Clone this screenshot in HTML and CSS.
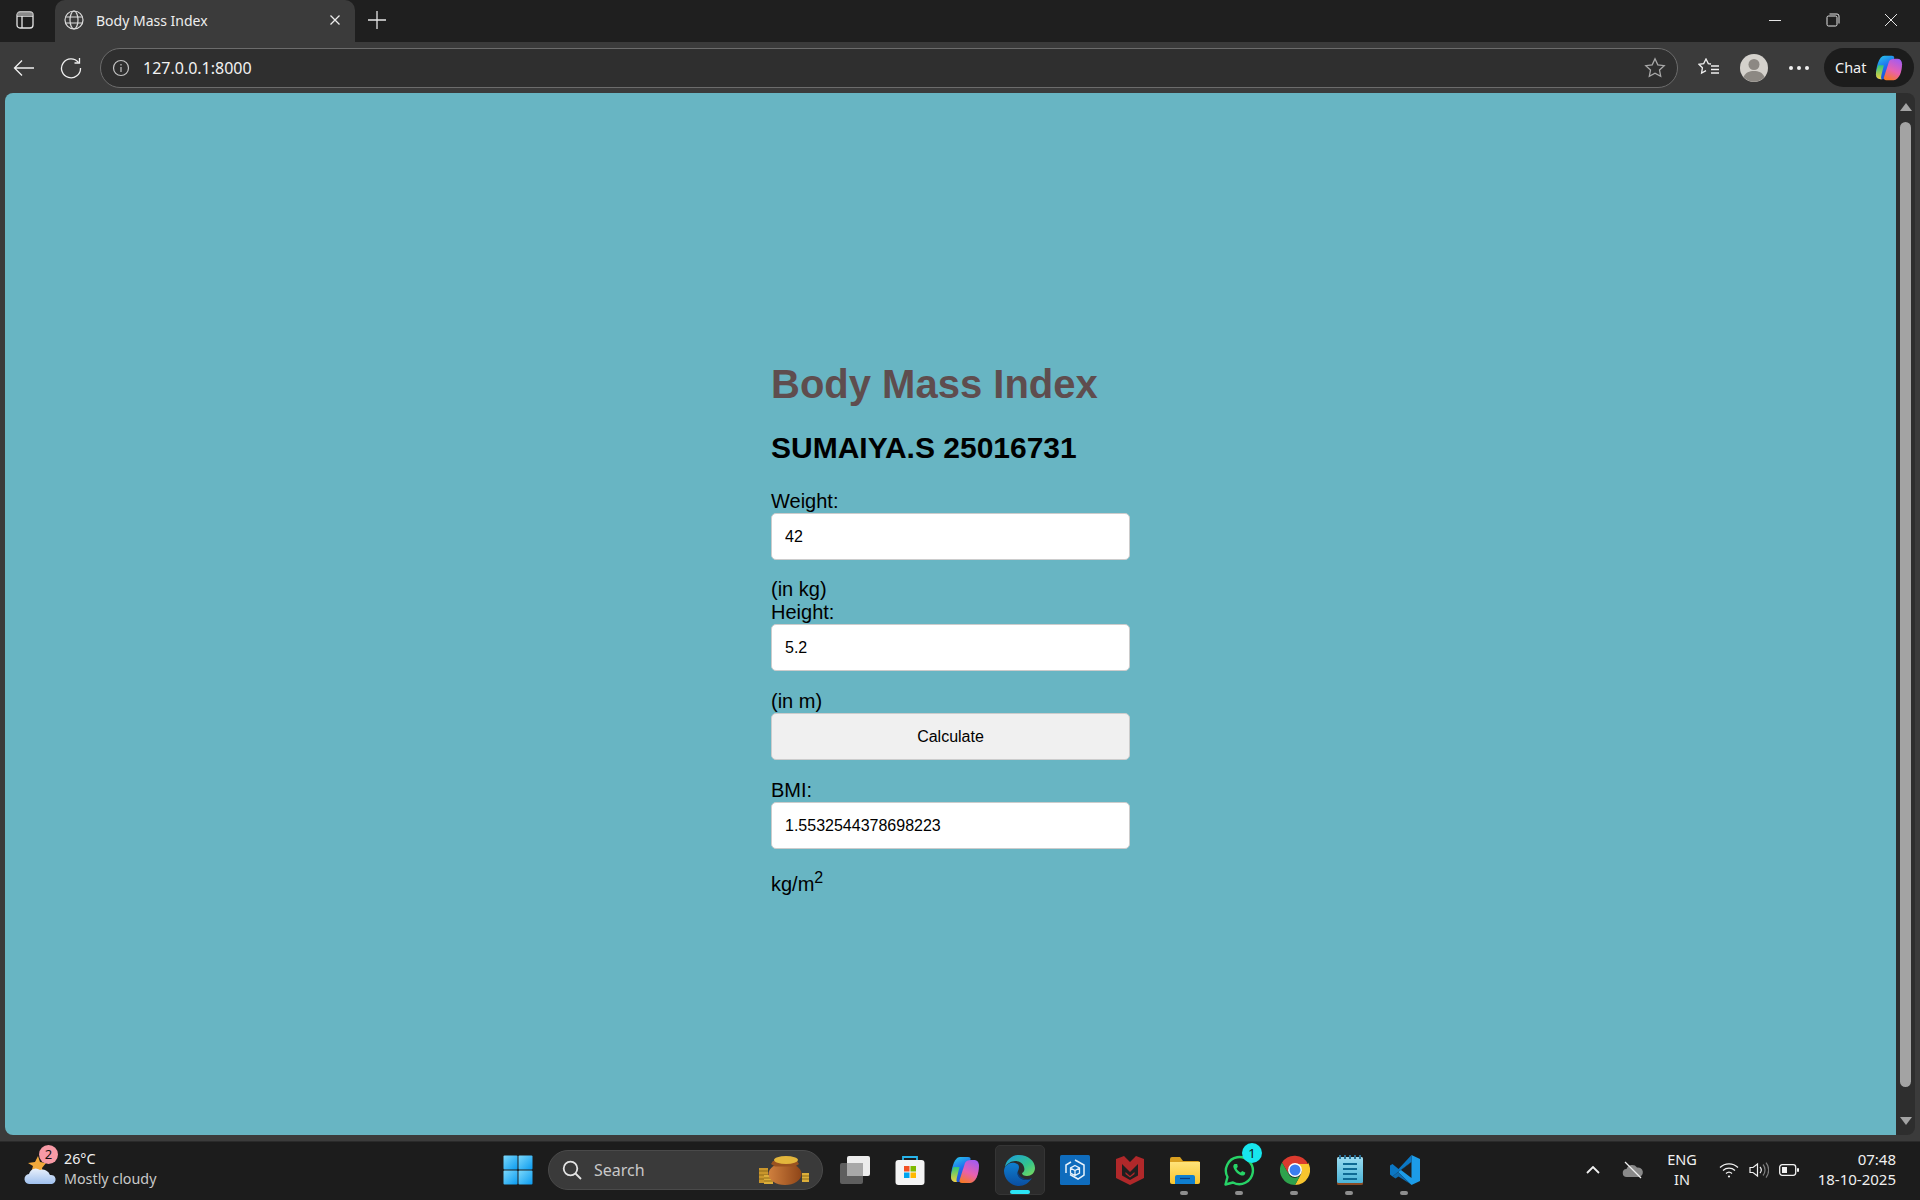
FILE: index.html
```html
<!DOCTYPE html>
<html lang="en">
<head>
    <meta charset="UTF-8">
    <title>Body Mass Index</title>
    <link rel="stylesheet" href="styles.css">
</head>
<body>
    <svg class="defs" width="0" height="0">
        <defs>
            <linearGradient id="copilotA" x1="0.2" y1="0" x2="0.6" y2="1">
                <stop offset="0" stop-color="#27c4ea"/>
                <stop offset="0.5" stop-color="#1f6cf0"/>
                <stop offset="1" stop-color="#1a4fd0"/>
            </linearGradient>
            <linearGradient id="copilotB" x1="0.7" y1="0" x2="0.3" y2="1">
                <stop offset="0" stop-color="#a45cf0"/>
                <stop offset="0.55" stop-color="#e860b0"/>
                <stop offset="1" stop-color="#f5782c"/>
            </linearGradient>
            <linearGradient id="copilotC" x1="0" y1="0" x2="0" y2="1">
                <stop offset="0" stop-color="#2fc77a"/>
                <stop offset="1" stop-color="#f2d03a"/>
            </linearGradient>
            <linearGradient id="edgeA" x1="0" y1="0" x2="1" y2="1">
                <stop offset="0" stop-color="#1b9de2"/>
                <stop offset="0.6" stop-color="#33c48c"/>
                <stop offset="1" stop-color="#7fdc5a"/>
            </linearGradient>
            <linearGradient id="edgeB" x1="0" y1="0" x2="0" y2="1">
                <stop offset="0" stop-color="#0f7fd0"/>
                <stop offset="1" stop-color="#0a4ea0"/>
            </linearGradient>
            <linearGradient id="startTile" x1="0" y1="0" x2="1" y2="1">
                <stop offset="0" stop-color="#7bd8fb"/>
                <stop offset="1" stop-color="#0a9bf0"/>
            </linearGradient>
            <linearGradient id="cloudFill" x1="0" y1="0" x2="0" y2="1">
                <stop offset="0" stop-color="#e8f0fb"/>
                <stop offset="1" stop-color="#9fc0ee"/>
            </linearGradient>
            <linearGradient id="potFill" x1="0" y1="0" x2="1" y2="0">
                <stop offset="0" stop-color="#d0803e"/>
                <stop offset="1" stop-color="#8e4518"/>
            </linearGradient>
            <linearGradient id="folderFill" x1="0" y1="0" x2="0" y2="1">
                <stop offset="0" stop-color="#ffe37a"/>
                <stop offset="1" stop-color="#f8c52e"/>
            </linearGradient>
            <linearGradient id="noteFill" x1="0" y1="0" x2="0" y2="1">
                <stop offset="0" stop-color="#9adcf0"/>
                <stop offset="1" stop-color="#4bb4d8"/>
            </linearGradient>
            <symbol id="copilot" viewBox="0 0 30 30">
                <path d="M10 2h8c2 0 3 1 2.400 3L15 22c-1 3-3 5-6 5H6c-3 0-5-2-5-5 0-7 3-20 9-20z" fill="url(#copilotA)"/>
                <path d="M1 22c0-3 1-7 2.500-10h6L7 22c-.6 3-1 5 1 5H6c-3 0-5-2-5-5z" fill="url(#copilotC)"/>
                <path d="M21 5h3c3 0 5 2 5 6 0 7-3 17-9 17h-8c-2 0-3-1-2.400-3l5.400-17c.8-2 3-3 6-3z" fill="url(#copilotB)"/>
            </symbol>
        </defs>
    </svg>

    <div class="tabstrip">
        <div class="sidebar-btn">
            <svg width="18" height="18" viewBox="0 0 18 18" fill="none" stroke="#e6e6e6" stroke-width="1.300">
                <rect x="1" y="1" width="16" height="16" rx="3"/>
                <path d="M1 5h16M6 5v12"/>
                <path d="M1.500 1.500h15v3.500h-15z" fill="#8a8a8a" stroke="none"/>
            </svg>
        </div>
        <div class="tab">
            <svg width="20" height="20" viewBox="0 0 20 20" fill="none" stroke="#dcdcdc" stroke-width="1.200">
                <circle cx="10" cy="10" r="9"/>
                <ellipse cx="10" cy="10" rx="4" ry="9"/>
                <path d="M1.500 7h17M1.500 13h17"/>
            </svg>
            <span class="tab-title">Body Mass Index</span>
            <svg class="tab-close" width="12" height="12" viewBox="0 0 12 12" stroke="#ededed" stroke-width="1.300">
                <path d="M1.500 1.500l9 9M10.500 1.500l-9 9"/>
            </svg>
        </div>
        <div class="new-tab">
            <svg width="18" height="18" viewBox="0 0 18 18" stroke="#e6e6e6" stroke-width="1.300">
                <path d="M9 0v18M0 9h18"/>
            </svg>
        </div>
        <div class="window-btns">
            <svg width="14" height="14" viewBox="0 0 14 14" stroke="#e6e6e6" stroke-width="1">
                <path d="M1 7.500h12"/>
            </svg>
            <svg width="14" height="14" viewBox="0 0 14 14" fill="none" stroke="#e6e6e6" stroke-width="1">
                <rect x="1" y="3" width="10" height="10" rx="1.500"/>
                <path d="M3.500 1h7.500a2 2 0 0 1 2 2v7.500"/>
            </svg>
            <svg width="14" height="14" viewBox="0 0 14 14" stroke="#e6e6e6" stroke-width="1">
                <path d="M1 1l12 12M13 1L1 13"/>
            </svg>
        </div>
    </div>

    <div class="toolbar">
        <div class="nav-btn">
            <svg width="22" height="18" viewBox="0 0 22 18" fill="none" stroke="#f0f0f0" stroke-width="1.300">
                <path d="M21 9H1.500M9 1.500L1.500 9 9 16.500"/>
            </svg>
        </div>
        <div class="nav-btn">
            <svg width="22" height="22" viewBox="0 0 22 22" fill="none" stroke="#f0f0f0" stroke-width="1.300">
                <path d="M18.500 5.500A9.500 9.500 0 1 0 20.500 11"/>
                <path d="M19.500 1v5h-5"/>
            </svg>
        </div>
        <div class="address">
            <svg width="18" height="18" viewBox="0 0 18 18" fill="none" stroke="#c4c4c4" stroke-width="1.200">
                <circle cx="9" cy="9" r="7.500"/>
                <path d="M9 8v5M9 5v1.500"/>
            </svg>
            <span class="url">127.0.0.1:8000</span>
            <svg class="fav-star" width="22" height="22" viewBox="0 0 22 22" fill="none" stroke="#a8a8a8" stroke-width="1.300">
                <path d="M11 1.800l2.800 6 6.400.8-4.700 4.400 1.200 6.400L11 16.300l-5.700 3.100 1.200-6.400L1.800 8.600l6.400-.8z"/>
            </svg>
        </div>
        <div class="toolbar-right">
            <svg class="favs" width="22" height="20" viewBox="0 0 22 20" fill="none" stroke="#f0f0f0" stroke-width="1.300">
                <path d="M13 6l-2.700-.4L8 1 5.700 5.600 1 6.300l3.400 3.500-.8 5.200L8 12.700"/>
                <path d="M13 8h8M13 11.500h8M13 15h8"/>
            </svg>
            <svg class="avatar" width="28" height="28" viewBox="0 0 28 28">
                <circle cx="14" cy="14" r="14" fill="#d4d1cc"/>
                <circle cx="14" cy="10.500" r="5.500" fill="#8c8883"/>
                <path d="M3.500 23c2-4.500 6-6 10.500-6s8.500 1.500 10.500 6A14 14 0 0 1 3.500 23z" fill="#8c8883"/>
            </svg>
            <div class="more"><i></i><i></i><i></i></div>
            <div class="chat">
                <span>Chat</span>
                <svg width="28" height="28"><use href="#copilot"/></svg>
            </div>
        </div>
    </div>

    <div class="main">
        <div class="viewport">
            <form class="bmi-form">
                <h1>Body Mass Index</h1>
                <h2>SUMAIYA.S 25016731</h2>
                <label>Weight:</label>
                <input class="field" type="text" value="42">
                <div class="unit">(in kg)</div>
                <label>Height:</label>
                <input class="field" type="text" value="5.2">
                <div class="unit unit-m">(in m)</div>
                <button class="field calc" type="button">Calculate</button>
                <label class="bmi-label">BMI:</label>
                <input class="field" type="text" value="1.5532544378698223">
                <div class="unit-last">kg/m<sup>2</sup></div>
            </form>
        </div>
        <div class="scrollbar">
            <div class="arrow-up"></div>
            <div class="thumb"></div>
            <div class="arrow-down"></div>
        </div>
    </div>

    <div class="taskbar">
        <div class="weather">
            <div class="weather-icon">
                <svg width="34" height="34" viewBox="0 0 34 34">
                    <path d="M14 3l2 6 6 1-4 5 1 6-6-3-6 2 2-7-5-3 7-1z" fill="#f2a93b"/>
                    <path d="M6 31a5 5 0 0 1-1-10 7 7 0 0 1 11-4 8 8 0 0 1 10 5 4.500 4.500 0 0 1 2 9z" fill="url(#cloudFill)"/>
                </svg>
                <span class="weather-badge">2</span>
            </div>
            <div class="weather-text">
                <div class="temp">26°C</div>
                <div class="cond">Mostly cloudy</div>
            </div>
        </div>

        <div class="task-items">
            <div class="task-btn">
                <svg width="30" height="30" viewBox="0 0 30 30" fill="url(#startTile)">
                    <rect x="0.500" y="0.500" width="14" height="14" rx="1"/>
                    <rect x="15.500" y="0.500" width="14" height="14" rx="1"/>
                    <rect x="0.500" y="15.500" width="14" height="14" rx="1"/>
                    <rect x="15.500" y="15.500" width="14" height="14" rx="1"/>
                </svg>
            </div>
            <div class="search">
                <svg width="20" height="20" viewBox="0 0 20 20" fill="none" stroke="#e4e4e4" stroke-width="1.800">
                    <circle cx="8.500" cy="8.500" r="6.800"/>
                    <path d="M13.500 13.500l5.500 5.500"/>
                </svg>
                <span>Search</span>
                <svg class="pot" width="50" height="30" viewBox="0 0 50 30">
                    <path d="M0 13h9v15H0z" fill="#c9962c"/>
                    <path d="M0 16h9M0 20h9M0 24h9" stroke="#8f6a18" stroke-width="1"/>
                    <path d="M5 20h9v9H5z" fill="#dcae3a"/>
                    <path d="M5 23h9M5 26h9" stroke="#8f6a18" stroke-width="1"/>
                    <path d="M43 18h7v9h-7z" fill="#dcae3a"/>
                    <path d="M43 21h7M43 24h7" stroke="#8f6a18" stroke-width="1"/>
                    <ellipse cx="26" cy="19" rx="16.500" ry="11" fill="url(#potFill)"/>
                    <path d="M14 6h24l2 3-4 2.500H16L12 9z" fill="#9a5220"/>
                    <ellipse cx="27" cy="5" rx="12" ry="4" fill="#e3b63c"/>
                </svg>
            </div>
            <div class="task-btn">
                <svg width="30" height="28" viewBox="0 0 30 28">
                    <rect x="0" y="7" width="23" height="21" rx="2" fill="#5e5e5e"/>
                    <rect x="7" y="0" width="23" height="20" rx="2" fill="#ececec"/>
                    <rect x="7" y="7" width="16" height="13" fill="#a8a8a8"/>
                </svg>
            </div>
            <div class="task-btn">
                <svg width="30" height="30" viewBox="0 0 30 30">
                    <path d="M8 6V2h14v4" fill="none" stroke="#27b5ec" stroke-width="1.800"/>
                    <rect x="0.500" y="5" width="29" height="25" rx="3" fill="#f4f4f4"/>
                    <rect x="9" y="11" width="5.500" height="5.500" fill="#f25022"/>
                    <rect x="15.500" y="11" width="5.500" height="5.500" fill="#7fba00"/>
                    <rect x="9" y="17.500" width="5.500" height="5.500" fill="#00a4ef"/>
                    <rect x="15.500" y="17.500" width="5.500" height="5.500" fill="#ffb900"/>
                </svg>
            </div>
            <div class="task-btn">
                <svg width="30" height="30"><use href="#copilot"/></svg>
            </div>
            <div class="task-btn task-current">
                <div class="task-active">
                    <svg width="31" height="31" viewBox="0 0 31 31">
                        <path d="M15 0c9 0 16 6 16 13 0 5-4 8-8 8-3 0-5-1-5-3 2-1 3-3 2-6-1-4-5-6-9-6C7 6 3 9 1 12 2 5 8 0 15 0z" fill="url(#edgeA)"/>
                        <path d="M1 12c3-4 7-5 10-4 4 1 5 4 3 8-2 5 3 9 8 9 3 0 5-1 6-2-3 5-8 8-13 8C7 31 0 24 0 16c0-1 .5-3 1-4z" fill="url(#edgeB)"/>
                        <path d="M14 16c-2 5 3 9 8 9 3 0 5-1 6-2-2 1-6 2-9 0-3-1-5-4-5-7z" fill="#0a3c80"/>
                    </svg>
                    <span class="active-dash"></span>
                </div>
            </div>
            <div class="task-btn">
                <svg width="30" height="30" viewBox="0 0 30 30" fill="none">
                    <rect width="30" height="30" rx="1.500" fill="#0f6cbd"/>
                    <path d="M15 5l9 5v10l-6 4-8-4.500M6 18v-8l5-3" stroke="#e8f2fb" stroke-width="1.500"/>
                    <path d="M15 10.500l4.500 2.500v5L15 20.500 10.500 18v-5zM10.500 13l4.500 2.500 4.500-2.500M15 15.500v5" stroke="#e8f2fb" stroke-width="1.300"/>
                </svg>
            </div>
            <div class="task-btn">
                <svg width="28" height="30" viewBox="0 0 28 30">
                    <path d="M0 4l8-3 6 6 6-6 8 3v19L14 30 0 23z" fill="#b0282a"/>
                    <path d="M6 9l8 8 8-8v11.500l-8 4.500-8-4.500z" fill="#1f1f1f"/>
                    <path d="M9.500 17l4.500 4 4.500-4v2l-4.500 3.500L9.500 19z" fill="#b0282a"/>
                </svg>
            </div>
            <div class="task-btn task-open">
                <svg width="30" height="27" viewBox="0 0 30 27">
                    <path d="M0 2a2 2 0 0 1 2-2h8l3 4h15a2 2 0 0 1 2 2v3H0z" fill="#d9a020"/>
                    <path d="M0 5h30v20a2 2 0 0 1-2 2H2a2 2 0 0 1-2-2z" fill="url(#folderFill)"/>
                    <path d="M5 27v-7a2 2 0 0 1 2-2h16a2 2 0 0 1 2 2v7z" fill="#0f7fd0"/>
                    <path d="M10 21.500h10" stroke="#0a3c80" stroke-width="1.300"/>
                </svg>
            </div>
            <div class="task-btn task-open">
                <svg width="31" height="31" viewBox="0 0 31 31" fill="none">
                    <path d="M1.500 29.500l2-7.500a13.500 13.500 0 1 1 5.500 5.500z" stroke="#27d367" stroke-width="2.400" stroke-linejoin="round"/>
                    <path d="M10.500 9c-1 .8-1.500 2-1 3.500 1 3.500 4.500 7 8 8 1.500.4 3-.2 3.500-1.500l.3-1.500-3.200-1.500-1.300 1.500c-2-.8-3.500-2.300-4.300-4.300l1.300-1.300L13.200 9z" fill="#27d367"/>
                </svg>
                <span class="wa-badge">1</span>
            </div>
            <div class="task-btn task-open">
                <svg width="30" height="30" viewBox="0 0 30 30">
                    <path d="M15 9h13A15 15 0 0 0 2 7.500l6.500 11.300A7 7 0 0 1 15 9z" fill="#db3a2e"/>
                    <path d="M28 7.500A15 15 0 0 1 15 30l6-11A7 7 0 0 0 15 9h13z" fill="#f8c52e"/>
                    <path d="M2 7.500A15 15 0 0 0 15 30l6-11a7 7 0 0 1-12.500-.200z" fill="#2ea24c"/>
                    <circle cx="15" cy="15" r="7" fill="#fff"/>
                    <circle cx="15" cy="15" r="5.500" fill="#3b7ef0"/>
                </svg>
            </div>
            <div class="task-btn task-open">
                <svg width="26" height="30" viewBox="0 0 26 30">
                    <rect y="2" width="26" height="28" rx="1.500" fill="#8a4a24"/>
                    <rect y="2" width="26" height="26" rx="1.500" fill="url(#noteFill)"/>
                    <path d="M3 0v4M8 0v4M13 0v4M18 0v4M23 0v4" stroke="#2a6f94" stroke-width="2"/>
                    <path d="M6 9h14M6 14h14M6 19h14M6 24h14" stroke="#0f6a94" stroke-width="1.800"/>
                </svg>
            </div>
            <div class="task-btn task-open">
                <svg width="30" height="30" viewBox="0 0 30 30">
                    <path d="M21.500 0L30 4v22l-8.500 4L8 17l13.500-10z" fill="#1c9ce8"/>
                    <path d="M21.500 0v7L8 17l-5.500 4.500L0 19.500V10.500l2.500-1.500 6 5z" fill="#0b77c4"/>
                    <path d="M21.500 30L8 17l-5.500 4.500 3 2 3-2 13.500 8.500z" fill="#0f6cb0"/>
                    <path d="M21.500 23V7L11 15z" fill="#1f1f1f"/>
                </svg>
            </div>
        </div>

        <div class="tray">
            <svg class="tray-chevron" width="14" height="8" viewBox="0 0 14 8" fill="none" stroke="#f0f0f0" stroke-width="1.800">
                <path d="M1 7l6-6 6 6"/>
            </svg>
            <svg class="tray-cloud" width="22" height="18" viewBox="0 0 22 18">
                <path d="M5 16a4 4 0 0 1-.5-8A6 6 0 0 1 15 6.500 4.800 4.800 0 0 1 17 16z" fill="#8a8a8a"/>
                <path d="M3 1l16 16" stroke="#f0f0f0" stroke-width="1.200"/>
            </svg>
            <div class="lang">ENG<br>IN</div>
            <svg class="tray-wifi" width="20" height="16" viewBox="0 0 20 16" fill="none" stroke="#f0f0f0" stroke-width="1.300">
                <path d="M1 5.500a13 13 0 0 1 18 0M4 8.500a9 9 0 0 1 12 0M7 11.500a4.500 4.500 0 0 1 6 0"/>
                <circle cx="10" cy="14.500" r="1.100" fill="#f0f0f0" stroke="none"/>
            </svg>
            <svg class="tray-sound" width="20" height="18" viewBox="0 0 20 18" fill="none" stroke="#f0f0f0" stroke-width="1.200">
                <path d="M1 6.500h3L8.500 3v12L4 11.500H1z"/>
                <path d="M11 6a4.500 4.500 0 0 1 0 6"/>
                <path d="M14 3.500a8.500 8.500 0 0 1 0 11M17 1.500a12 12 0 0 1 0 15" stroke="#7e7e7e"/>
            </svg>
            <svg class="tray-battery" width="20" height="12" viewBox="0 0 20 12">
                <rect x="0.700" y="0.700" width="16" height="10.600" rx="2.500" fill="none" stroke="#f0f0f0" stroke-width="1.300"/>
                <rect x="3" y="3" width="5" height="6" fill="#f0f0f0"/>
                <rect x="18" y="4" width="2" height="4" rx="1" fill="#f0f0f0"/>
            </svg>
            <div class="clock">07:48<br>18-10-2025</div>
        </div>
    </div>
</body>
</html>
```

FILE: styles.css
```css
* {
    box-sizing: border-box;
}
body {
    margin: 0;
    width: 1920px;
    height: 1200px;
    overflow: hidden;
    background-color: #3b3b3b;
    font-family: "Noto Sans", sans-serif;
    color: #f0f0f0;
}
svg {
    display: block;
    flex: none;
}
.defs {
    position: absolute;
}

/* tab strip */
.tabstrip {
    display: flex;
    align-items: center;
    height: 42px;
    padding-bottom: 2px;
    background-color: #1f1f1f;
}
.sidebar-btn {
    display: flex;
    justify-content: center;
    width: 50px;
    margin-right: 5px;
}
.tab {
    display: flex;
    align-items: center;
    width: 300px;
    height: 42px;
    margin-bottom: -2px;
    padding: 0 14px 2px 9px;
    background-color: #3b3b3b;
    border-radius: 10px 10px 0 0;
}
.tab-title {
    flex: 1;
    margin-left: 12px;
    font-size: 14px;
    color: #ededed;
}
.new-tab {
    margin-left: 13px;
}
.window-btns {
    display: flex;
    gap: 44px;
    margin-left: auto;
    margin-right: 22px;
}

/* toolbar */
.toolbar {
    display: flex;
    align-items: center;
    height: 51px;
}
.nav-btn {
    display: flex;
    justify-content: center;
    width: 45px;
}
.nav-btn:first-child {
    width: 48px;
}
.address {
    display: flex;
    align-items: center;
    width: 1578px;
    height: 40px;
    margin-left: 7px;
    padding: 0 11px 0 11px;
    background-color: #2f2f2f;
    border: 1px solid #6c6c6c;
    border-radius: 20px;
}
.url {
    flex: 1;
    margin-left: 13px;
    font-size: 16px;
    color: #f2f2f2;
}
.toolbar-right {
    display: flex;
    align-items: center;
    flex: 1;
}
.favs {
    margin-left: 20px;
}
.avatar {
    margin-left: 20px;
}
.more {
    display: flex;
    gap: 4px;
    margin-left: 21px;
}
.more i {
    width: 4px;
    height: 4px;
    border-radius: 50%;
    background-color: #f0f0f0;
}
.chat {
    display: flex;
    align-items: center;
    gap: 8px;
    width: 90px;
    height: 39px;
    margin-left: 15px;
    padding-left: 11px;
    background-color: #1c1c1c;
    border-radius: 20px;
    font-size: 14.500px;
}
.chat span {
    margin-top: -2px;
}

/* page */
.main {
    display: flex;
    height: 1048px;
    padding: 0 5px 6px 5px;
}
.viewport {
    flex: 1;
    background-color: #68b5c3;
    border-radius: 8px 0 0 8px;
    padding-top: 268px;
    font-family: "Liberation Sans", Arial, sans-serif;
    color: #000;
}
.scrollbar {
    display: flex;
    flex-direction: column;
    align-items: center;
    width: 19px;
    background-color: #2e2e2e;
    border-radius: 0 8px 8px 0;
}
.arrow-up {
    margin-top: 10px;
    border-left: 6px solid transparent;
    border-right: 6px solid transparent;
    border-bottom: 8px solid #a3a3a3;
}
.thumb {
    width: 11px;
    height: 965px;
    margin-top: 11px;
    border-radius: 6px;
    background-color: #a3a3a3;
}
.arrow-down {
    margin-top: 30px;
    border-left: 6px solid transparent;
    border-right: 6px solid transparent;
    border-top: 8px solid #a3a3a3;
}

/* form */
.bmi-form {
    display: flex;
    flex-direction: column;
    width: 359px;
    margin: 0 auto;
    font-size: 20px;
    line-height: 23px;
}
h1 {
    margin: 0;
    font-size: 40px;
    line-height: 46px;
    color: #5f4d4e;
}
h2 {
    margin: 24px 0 25px;
    font-size: 30px;
    line-height: 34px;
}
.field {
    width: 359px;
    height: 47px;
    padding: 0 13px;
    background-color: #fff;
    border: 1px solid #cccccc;
    border-radius: 5px;
    font-family: "Liberation Sans", Arial, sans-serif;
    font-size: 16px;
    color: #000;
}
.unit {
    margin-top: 18px;
}
.unit-m {
    margin-top: 19px;
}
.calc {
    background-color: #f0f0f0;
}
.bmi-label {
    margin-top: 19px;
}
.unit-last {
    margin-top: 24px;
}
sup {
    font-size: 16px;
    line-height: 0;
}

/* taskbar */
.taskbar {
    display: flex;
    align-items: center;
    height: 59px;
    padding-bottom: 2px;
    background-color: #1c1c1c;
    border-top: 1px solid #2a2a2a;
}
.weather {
    display: flex;
    align-items: center;
    width: 490px;
    padding-left: 24px;
}
.weather-icon {
    position: relative;
    width: 40px;
}
.weather-badge {
    position: absolute;
    top: -8px;
    left: 15px;
    width: 19px;
    height: 19px;
    border-radius: 50%;
    background-color: #f79aa6;
    color: #111;
    font-size: 13px;
    line-height: 19px;
    text-align: center;
}
.weather-text {
    margin-top: -2px;
    font-size: 14.300px;
    line-height: 20px;
}
.cond {
    color: #c9c9c9;
}
.task-items {
    display: flex;
    align-items: center;
}
.task-btn {
    position: relative;
    display: flex;
    align-items: center;
    justify-content: center;
    width: 55px;
    height: 50px;
}
.search {
    display: flex;
    align-items: center;
    width: 275px;
    height: 40px;
    margin: 0 4px 0 3px;
    padding: 0 13px;
    background-color: #3a3a3a;
    border: 1px solid #4a4a4a;
    border-radius: 20px;
    font-size: 16px;
    color: #c8c8c8;
}
.search span {
    flex: 1;
    margin-left: 12px;
}
.task-active {
    position: relative;
    display: flex;
    align-items: center;
    justify-content: center;
    width: 50px;
    height: 50px;
    background-color: #2b2b2b;
    border: 1px solid #353535;
    border-radius: 5px;
}
.active-dash {
    position: absolute;
    bottom: 0;
    left: 14px;
    width: 20px;
    height: 4px;
    border-radius: 2px;
    background-color: #2be4f5;
}
.task-open::after {
    content: "";
    position: absolute;
    bottom: 0;
    left: 23px;
    width: 8px;
    height: 4px;
    border-radius: 2px;
    background-color: #8e8e8e;
}
.wa-badge {
    position: absolute;
    top: -2px;
    left: 30px;
    width: 20px;
    height: 20px;
    border-radius: 50%;
    background-color: #17e6ee;
    color: #111;
    font-size: 13px;
    line-height: 20px;
    text-align: center;
}
.tray {
    display: flex;
    align-items: center;
    flex: 1;
    font-size: 14.500px;
    line-height: 20px;
}
.tray-chevron {
    margin-left: 154px;
}
.tray-cloud {
    margin-left: 22px;
}
.lang {
    margin-top: -2px;
    margin-left: 13px;
    width: 50px;
    text-align: center;
}
.tray-wifi {
    margin-left: 12px;
}
.tray-sound {
    margin-left: 10px;
}
.tray-battery {
    margin-left: 10px;
}
.clock {
    margin-top: -3px;
    margin-left: auto;
    margin-right: 24px;
    font-size: 15px;
    text-align: right;
}
```
